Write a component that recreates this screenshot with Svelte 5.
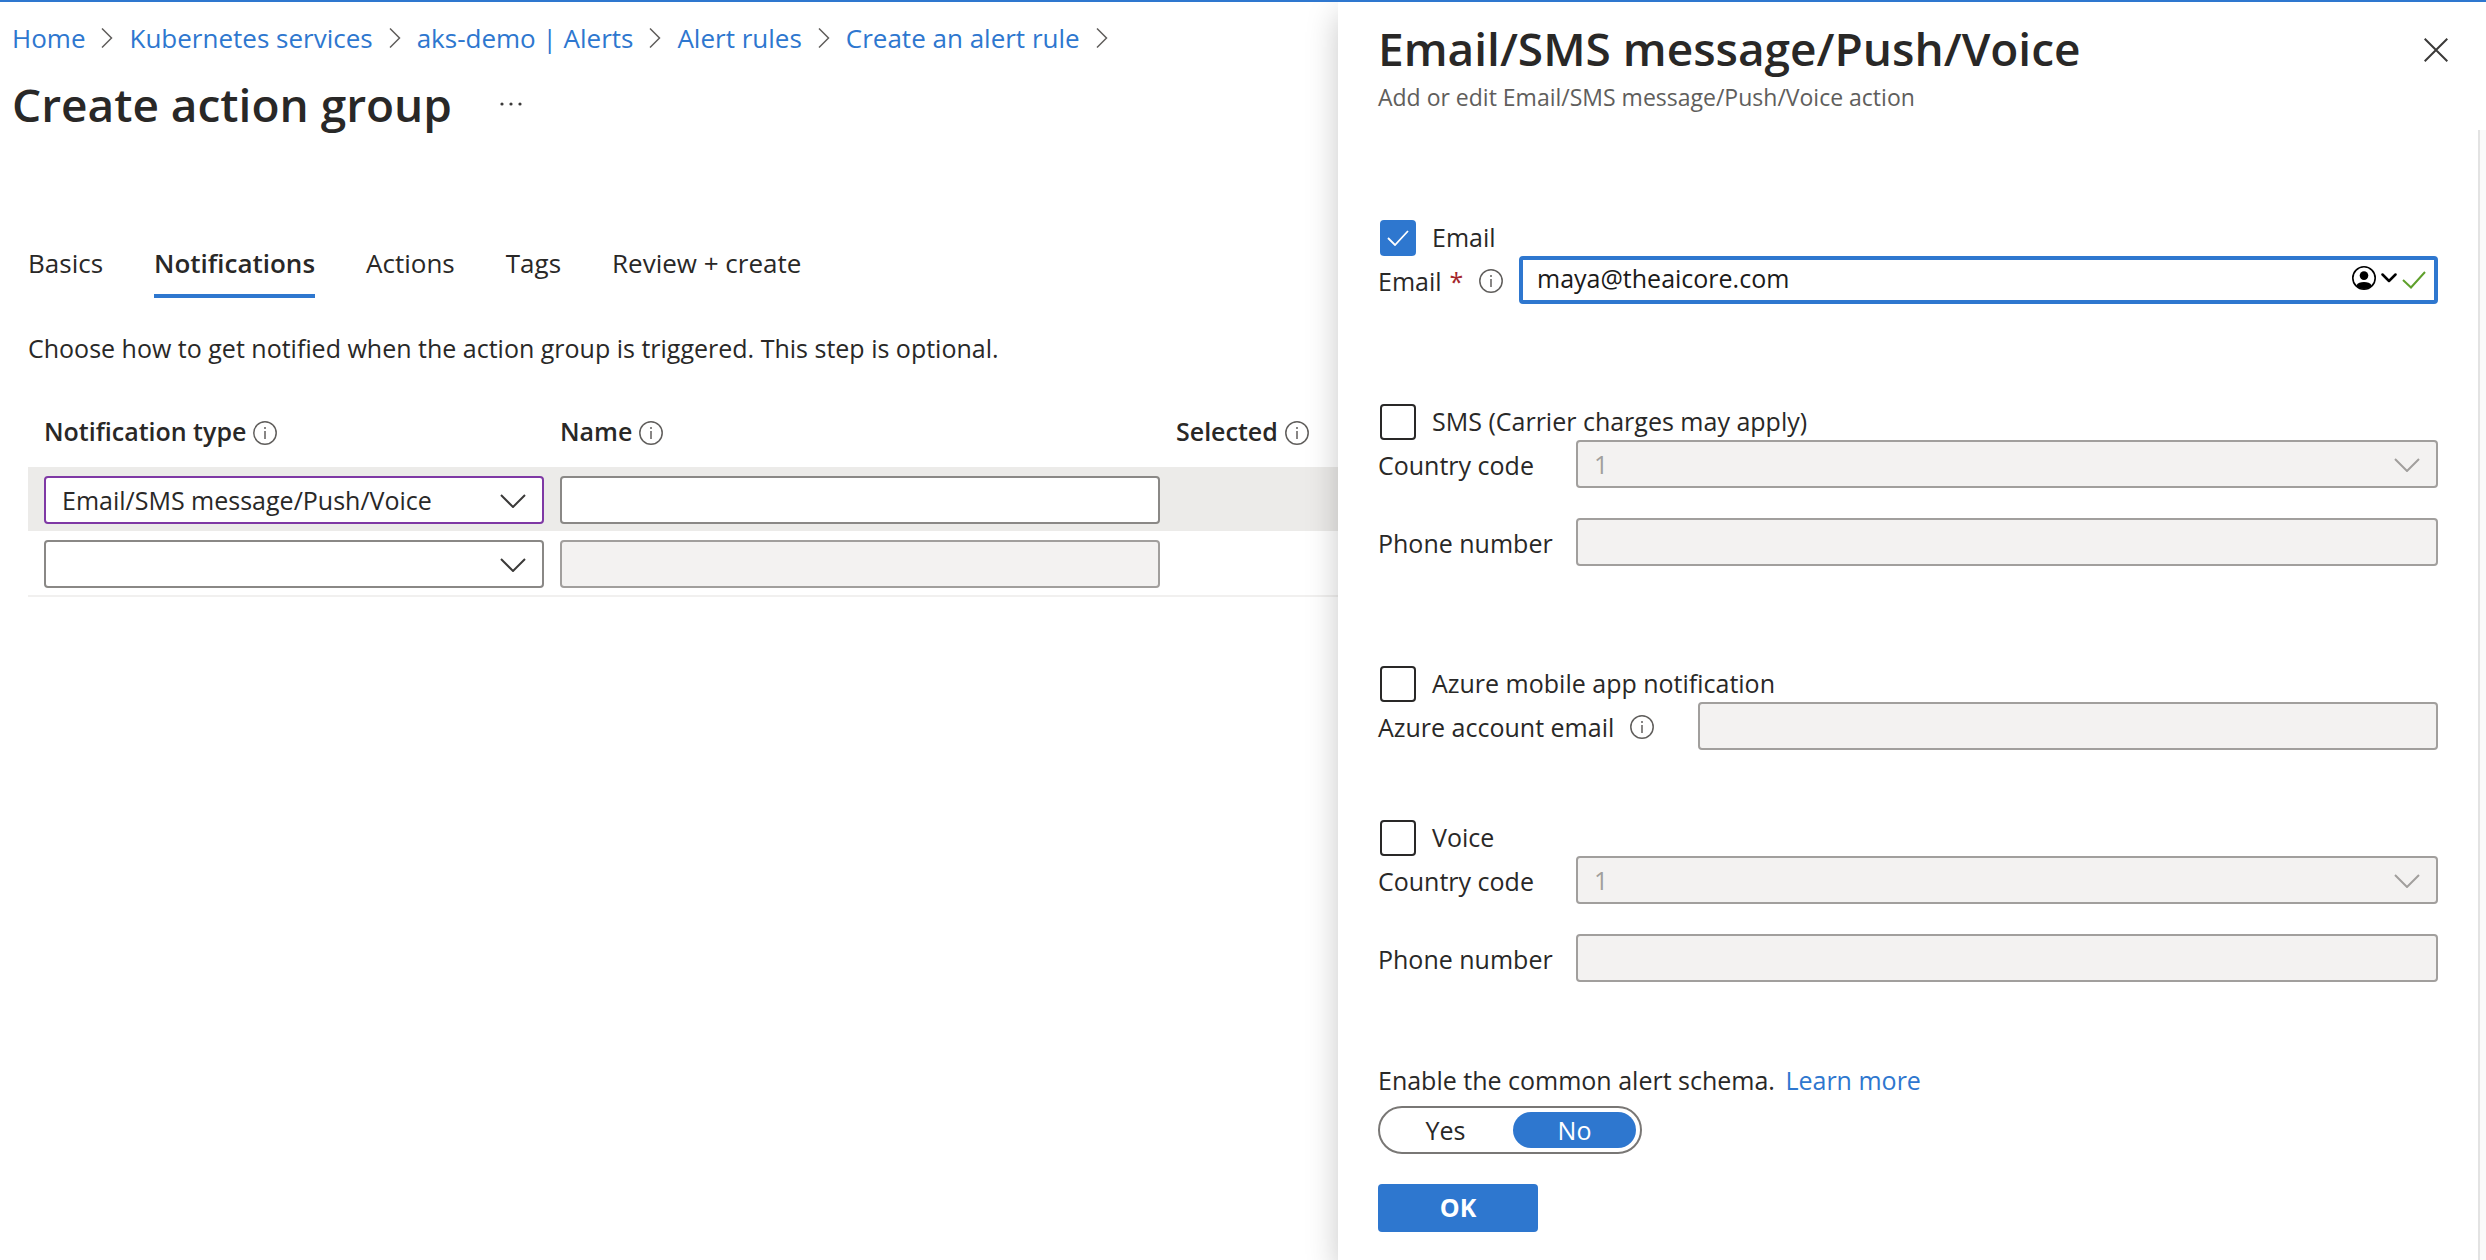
<script>
  const crumbs = [
    'Home',
    'Kubernetes services',
    'aks-demo | Alerts',
    'Alert rules',
    'Create an alert rule',
  ];
  const tabs = ['Basics', 'Notifications', 'Actions', 'Tags', 'Review + create'];
  let activeTab = $state('Notifications');
  let schema = $state('no');
  let email = $state('maya@theaicore.com');
</script>

{#snippet info()}
  <svg class="info" viewBox="0 0 24 24" aria-hidden="true">
    <circle cx="12" cy="12" r="11.2" />
    <path d="M12 10v8" />
    <path d="M12 6v2" />
  </svg>
{/snippet}

{#snippet chevronDown()}
  <svg class="chevron" viewBox="0 0 26 14" aria-hidden="true">
    <path d="M1 1l12 12L25 1" />
  </svg>
{/snippet}

{#snippet phoneRows(prefix)}
  <div class="field wide-label">
    <label for="{prefix}-code">Country code</label>
    <div class="select">
      <select id="{prefix}-code" disabled>
        <option>1</option>
      </select>
      {@render chevronDown()}
    </div>
  </div>
  <div class="field wide-label spaced">
    <label for="{prefix}-phone">Phone number</label>
    <input class="box" id="{prefix}-phone" type="tel" disabled />
  </div>
{/snippet}

<div class="page">
  <main class="blade">
    <nav class="crumbs" aria-label="Breadcrumb">
      {#each crumbs as crumb}
        <a href="#top">{crumb}</a>
        <svg class="sep" viewBox="0 0 12 20" aria-hidden="true"><path d="M1 0.5l9.5 9.5L1 19.5" /></svg>
      {/each}
    </nav>

    <header class="heading">
      <h1>Create action group</h1>
      <button class="more" type="button" aria-label="More actions">
        <svg viewBox="0 0 22 4" aria-hidden="true">
          <circle cx="2" cy="2" r="1.6" />
          <circle cx="11" cy="2" r="1.6" />
          <circle cx="20" cy="2" r="1.6" />
        </svg>
      </button>
    </header>

    <div class="content">
      <div class="tabs" role="tablist">
        {#each tabs as tab}
          <button
            type="button"
            role="tab"
            aria-selected={activeTab === tab}
            class:active={activeTab === tab}
            onclick={() => (activeTab = tab)}>{tab}</button
          >
        {/each}
      </div>

      <p class="intro">
        Choose how to get notified when the action group is triggered. This step is optional.
      </p>

      <table>
        <thead>
          <tr>
            <th class="type"><span>Notification type {@render info()}</span></th>
            <th class="name"><span>Name {@render info()}</span></th>
            <th><span>Selected {@render info()}</span></th>
          </tr>
        </thead>
        <tbody>
          <tr class="current">
            <td>
              <div class="select changed">
                <select aria-label="Notification type">
                  <option>Email/SMS message/Push/Voice</option>
                </select>
                {@render chevronDown()}
              </div>
            </td>
            <td><input class="box" type="text" aria-label="Name" /></td>
            <td></td>
          </tr>
          <tr class="last">
            <td>
              <div class="select">
                <select aria-label="Notification type">
                  <option></option>
                </select>
                {@render chevronDown()}
              </div>
            </td>
            <td><input class="box" type="text" aria-label="Name" disabled /></td>
            <td></td>
          </tr>
        </tbody>
      </table>
    </div>
  </main>

  <aside class="panel">
    <header class="panel-head">
      <div>
        <h2>Email/SMS message/Push/Voice</h2>
        <p>Add or edit Email/SMS message/Push/Voice action</p>
      </div>
      <button class="close" type="button" aria-label="Close">
        <svg viewBox="0 0 24 24" aria-hidden="true"><path d="M0.7 0.7l22.6 22.6M23.3 0.7L0.7 23.3" /></svg>
      </button>
    </header>

    <div class="panel-body">
      <form class="form" onsubmit={(e) => e.preventDefault()}>
        <section class="group">
          <label class="check"><input type="checkbox" checked /><span>Email</span></label>
          <div class="field short-label">
            <label for="email">Email <span class="star">*</span> {@render info()}</label>
            <div class="email">
              <input class="box focused" id="email" type="text" bind:value={email} />
              <div class="marks">
                <svg class="person" viewBox="0 0 24 24" aria-hidden="true">
                  <circle class="ring" cx="12" cy="12" r="11.2" />
                  <circle cx="12" cy="9.6" r="4.3" />
                  <path d="M4.4 19.2C5.6 16.8 8.6 16 12 16s6.4.8 7.6 3.2C17.8 21.7 15 23 12 23s-5.8-1.3-7.6-3.8z" />
                </svg>
                <svg class="caret" viewBox="0 0 16 10" aria-hidden="true"><path d="M1.5 1.5L8 8l6.5-6.5" /></svg>
                <svg class="tick" viewBox="0 0 24 18" aria-hidden="true"><path d="M1 9l8 7.5L23 1" /></svg>
              </div>
            </div>
          </div>
        </section>

        <section class="group">
          <label class="check"><input type="checkbox" /><span>SMS (Carrier charges may apply)</span></label>
          {@render phoneRows('sms')}
        </section>

        <section class="group near">
          <label class="check"><input type="checkbox" /><span>Azure mobile app notification</span></label>
          <div class="field widest-label">
            <label for="azure">Azure account email {@render info()}</label>
            <input class="box" id="azure" type="text" disabled />
          </div>
        </section>

        <section class="group end">
          <label class="check"><input type="checkbox" /><span>Voice</span></label>
          {@render phoneRows('voice')}
        </section>

        <p class="schema">Enable the common alert schema. <a href="#schema">Learn more</a></p>
        <div class="toggle" role="radiogroup" aria-label="Enable the common alert schema">
          <label><input type="radio" value="yes" bind:group={schema} /><span>Yes</span></label>
          <label><input type="radio" value="no" bind:group={schema} /><span>No</span></label>
        </div>
        <button class="ok" type="submit">OK</button>
      </form>
      <div class="gutter"></div>
    </div>
  </aside>
</div>

<style>
  :global(body) {
    margin: 0;
    background: #fff;
  }
  * {
    box-sizing: border-box;
  }
  .page {
    display: grid;
    grid-template-columns: minmax(0, 1338fr) minmax(0, 1148fr);
    min-height: 100vh;
    border-top: 2px solid #2e77cf;
    font-family: 'Open Sans', 'Noto Sans', sans-serif;
    font-size: 25px;
    line-height: 36px;
    color: #292827;
  }
  button,
  input,
  select {
    margin: 0;
    font: inherit;
    color: inherit;
  }
  button {
    padding: 0;
    border: 0;
    background: none;
  }
  a {
    color: #2e77cf;
    text-decoration: none;
  }
  h1,
  h2,
  p {
    margin: 0;
  }
  h1,
  h2 {
    font-size: 46px;
    line-height: 60px;
    font-weight: 600;
  }
  svg {
    flex: none;
    fill: none;
    stroke: #3b3a39;
  }

  .blade {
    overflow: hidden;
    white-space: nowrap;
  }
  .crumbs {
    display: flex;
    align-items: center;
    gap: 16px;
    padding: 18px 12px 0;
    font-size: 26px;
  }
  .sep {
    width: 12px;
    height: 20px;
    stroke: #605e5c;
    stroke-width: 1.5;
  }
  .heading {
    display: flex;
    align-items: center;
    gap: 48px;
    padding: 18px 12px 0;
  }
  .more {
    display: flex;
  }
  .more svg {
    width: 22px;
    height: 4px;
    stroke: none;
    fill: #3b3a39;
  }
  .content {
    padding: 111px 0 0 28px;
  }
  .tabs {
    display: flex;
    gap: 51px;
    font-size: 26px;
  }
  .tabs button {
    padding-bottom: 13px;
    border-bottom: 4px solid transparent;
  }
  .tabs .active {
    border-color: #2e77cf;
    font-weight: 600;
  }
  .intro {
    padding-top: 32px;
  }

  table {
    width: 100%;
    margin-top: 47px;
    border-collapse: collapse;
    table-layout: fixed;
  }
  th {
    padding: 0 8px 18px;
    text-align: left;
    font-weight: 600;
  }
  th span {
    display: flex;
    align-items: center;
    gap: 7px;
  }
  th .info {
    margin-top: 4px;
  }
  th:first-child,
  td:first-child {
    padding-left: 16px;
  }
  .type {
    width: 524px;
  }
  .name {
    width: 616px;
  }
  td {
    padding: 9px 8px 7px;
  }
  .current {
    background: #ecebe9;
  }
  .last {
    border-bottom: 2px solid #f1f0ef;
  }

  .info {
    width: 24px;
    height: 24px;
    stroke: #605e5c;
    stroke-width: 1.5;
  }
  .box,
  select {
    display: block;
    width: 100%;
    height: 48px;
    padding: 0 16px;
    border: 2px solid #8a8886;
    border-radius: 4px;
    background: #fff;
    outline: 0;
  }
  .box:disabled,
  select:disabled {
    border-color: #a19f9d;
    background: #f3f2f1;
    color: #a19f9d;
    opacity: 1;
  }
  select {
    appearance: none;
  }
  .select {
    position: relative;
  }
  .changed select {
    border-color: #7f39a5;
  }
  .chevron {
    position: absolute;
    right: 18px;
    top: 18px;
    width: 26px;
    height: 14px;
    stroke-width: 2;
    pointer-events: none;
  }
  select:disabled + .chevron {
    stroke: #a19f9d;
  }

  .panel {
    display: flex;
    flex-direction: column;
    position: relative;
    background: #fff;
    box-shadow: 0 12px 30px rgba(0, 0, 0, 0.22);
    clip-path: inset(0 0 0 -60px);
  }
  .panel-head {
    display: flex;
    justify-content: space-between;
    align-items: flex-start;
    height: 128px;
    padding: 16px 38px 0 40px;
  }
  .panel-head p {
    font-size: 23px;
    line-height: 38px;
    color: #605e5c;
  }
  .close {
    display: flex;
    margin-top: 20px;
  }
  .close svg {
    width: 24px;
    height: 24px;
    stroke-width: 2;
  }
  .panel-body {
    display: flex;
    flex: 1;
  }
  .form {
    flex: 1;
    min-width: 0;
    padding: 90px 40px 28px;
  }
  .gutter {
    width: 8px;
    border-left: 2px solid #e3e3e3;
    background: #fafafa;
  }
  .group {
    margin-bottom: 100px;
  }
  .group.near {
    margin-bottom: 70px;
  }
  .group.end {
    margin-bottom: 80px;
  }
  .check {
    display: flex;
    align-items: center;
    gap: 16px;
    width: max-content;
    height: 36px;
    padding-left: 2px;
  }
  .check span {
    padding-bottom: 3px;
  }
  .check input {
    appearance: none;
    width: 36px;
    height: 36px;
    border: 2px solid #292827;
    border-radius: 4px;
  }
  .check input:checked {
    border-color: #2e77cf;
    background: #2e77cf
      url("data:image/svg+xml,%3Csvg xmlns='http://www.w3.org/2000/svg' viewBox='0 0 22 16'%3E%3Cpath d='M1 8l7 7L21 1' fill='none' stroke='white' stroke-width='1.8'/%3E%3C/svg%3E")
      center / 22px 16px no-repeat;
  }
  .field {
    display: grid;
    align-items: center;
  }
  .field label {
    display: flex;
    align-items: center;
    padding-top: 2px;
    white-space: nowrap;
  }
  .field .info {
    margin-left: 16px;
  }
  .spaced {
    margin-top: 30px;
  }
  .short-label {
    grid-template-columns: 141px minmax(0, 1fr);
  }
  .wide-label {
    grid-template-columns: 198px minmax(0, 1fr);
  }
  .widest-label {
    grid-template-columns: 320px minmax(0, 1fr);
  }
  .star {
    margin-left: 8px;
    color: #a4262c;
  }
  .email {
    position: relative;
  }
  .focused {
    border: 4px solid #2e77cf;
    padding: 0 110px 4px 14px;
    color: #1b1a19;
  }
  .marks {
    display: flex;
    align-items: center;
    gap: 5px;
    position: absolute;
    top: 10px;
    right: 12px;
  }
  .person {
    width: 24px;
    height: 24px;
    stroke: none;
    fill: #000;
  }
  .person .ring {
    fill: none;
    stroke: #000;
    stroke-width: 1.6;
  }
  .caret {
    width: 16px;
    height: 10px;
    stroke: #000;
    stroke-width: 2.5;
    stroke-linecap: round;
    stroke-linejoin: round;
  }
  .tick {
    width: 24px;
    height: 18px;
    margin-top: 3px;
    stroke: #5fa02c;
    stroke-width: 2;
  }
  .schema a {
    margin-left: 4px;
  }
  .toggle {
    display: grid;
    grid-template-columns: 1fr 1fr;
    gap: 6px;
    width: 264px;
    height: 48px;
    margin-top: 8px;
    padding: 4px;
    border: 2px solid #797775;
    border-radius: 24px;
  }
  .toggle label {
    display: flex;
  }
  .toggle input {
    appearance: none;
    width: 0;
    height: 0;
  }
  .toggle span {
    flex: 1;
    border-radius: 18px;
    text-align: center;
  }
  .toggle input:checked + span {
    background: #2e77cf;
    color: #fff;
  }
  .ok {
    display: block;
    width: 160px;
    height: 48px;
    margin-top: 30px;
    padding-bottom: 2px;
    border-radius: 4px;
    background: #2e77cf;
    color: #fff;
    font-weight: 700;
  }
</style>
